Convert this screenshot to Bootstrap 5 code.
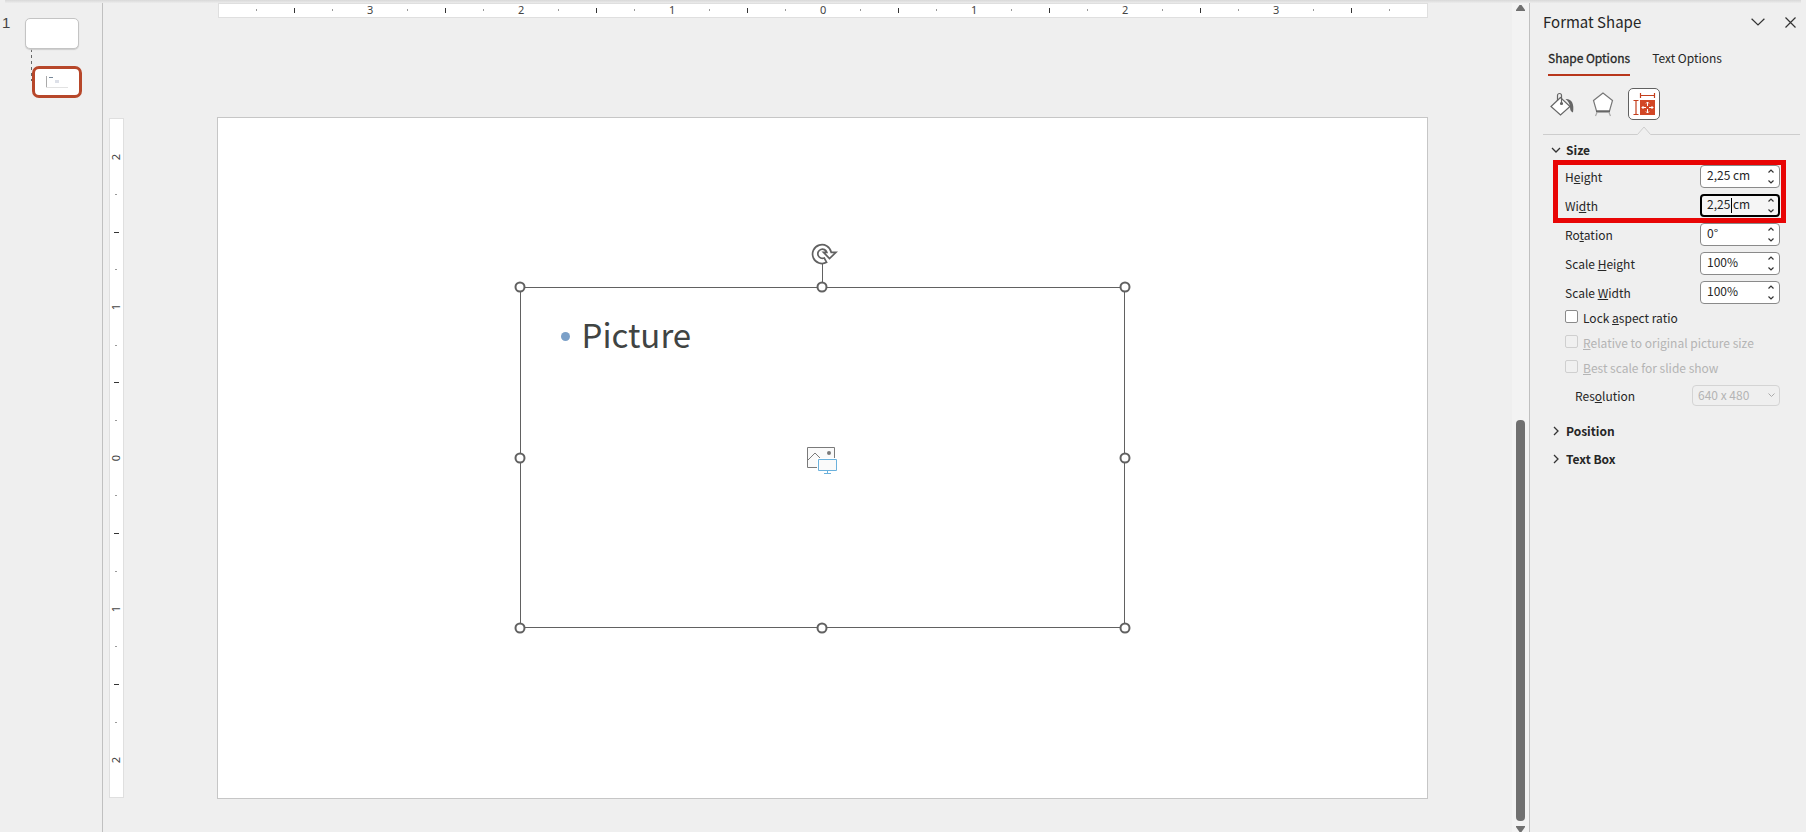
<!DOCTYPE html>
<html lang="en">
<head>
<meta charset="utf-8">
<meta name="viewport" content="width=device-width, initial-scale=1">
<title>Format Shape</title>
<link href="https://cdn.jsdelivr.net/npm/bootstrap@5.3.0/dist/css/bootstrap.min.css" rel="stylesheet">
<style>
:root { --ui: "Noto Sans CJK SC", "Noto Sans", sans-serif; --line: #c0c0c0; --accent: #b7472a; }
body { background: #efefef; color: #262626; font: 12px/16px var(--ui); }
.app-shell { min-height: 100vh; }
.app-shell::before { content: ""; position: absolute; inset: 0 5px auto 5px; height: 3px; background: linear-gradient(#d8d8d8, #ececec); }
/* Slide thumbnails */
.thumbs { width: 103px; border-right: 1px solid var(--line); padding: 15px 20px 0 2px; }
.thumb-no { font: 15px/15px "Liberation Sans", sans-serif; width: 23px; color: #444; }
.thumb-a { width: 54px; height: 31px; margin-top: 3px; border: 1px solid #c4c4c4; border-radius: 5px; box-shadow: 0 1px 1px #ccc; }
.thumb-b { width: 50px; height: 32px; margin: -15px 0 0 30px; border: 3px solid var(--accent); border-radius: 7px; }
.thumb-link { width: 1px; height: 32px; background: repeating-linear-gradient(#666 0 3px, transparent 3px 6px); margin-left: 29px; }
/* Canvas */
.stage { display: grid; grid-template-columns: 15px minmax(0, 1fr); grid-template-rows: 15px auto; column-gap: 93px; row-gap: 99px; align-content: start; padding: 3px 84px 0 6px; }
.ruler { background: #fff; border: 1px solid #dfdfdf; display: flex; font: 11px/12px "Noto Sans", sans-serif; color: #444; }
.ruler span { flex: 1 1 0; min-width: 0; min-height: 0; display: flex; align-items: center; justify-content: center; }
.ruler-x { grid-column: 2; padding: 0 1.5625% 1px; margin-left: 1px; }
.ruler-y { flex-direction: column; margin: 1px 0; padding-right: 1px; }
.ruler-y::before, .ruler-y::after { content: ""; flex: .5 1 0; }
.ruler-y b { writing-mode: vertical-rl; transform: rotate(180deg); }
.ruler b { font-weight: 400; }
.ruler i { background: #333; width: 1px; height: 5px; }
.ruler i.dot { background: #999; height: 2px; }
.ruler-y i { width: 5px; height: 1px; }
.ruler-y i.dot { width: 2px; height: 1px; }
.slide { aspect-ratio: 1212 / 683; background: #fff; box-shadow: inset 0 0 0 1px #c6c6c6; padding: 0 1px 1px 0; }
.frame { width: 50%; height: 50%; box-shadow: inset 0 0 0 1px #616161; padding: 24px 41px; }
.frame h1 { font: 33px/46px "Noto Sans CJK SC", sans-serif; color: #404443; gap: 12px; }
.bullet { width: 9px; height: 9px; margin-top: 4px; background: #7ba0c8; }
.grip { width: 11px; height: 11px; border: 2px solid #616161; background: #fff; }
.stem { height: 18px; width: 1px; background: #616161; top: -23px; }
.turn { top: -45px; margin-left: 2px; }
/* Scrollbar */
.scroll-col { width: 17px; background: #f3f3f3; padding: 4px 0 0; }
.scroll-thumb { width: 9px; background: #707070; border-radius: 4px; }
/* Format pane */
.pane { width: 277px; border-left: 1px solid var(--line); padding: 11px 6px 0 13px; }
.pane h2 { font: 15px/22px var(--ui); }
.plain { border: 0; background: none; padding: 0; display: flex; color: inherit; }
.pane-tabs { gap: 22px; padding-left: 5px; margin-top: 12px; }
.pane-tabs .nav-link { padding: 5px 0 8px; line-height: 16px; color: #262626; border-bottom: 2px solid transparent; white-space: nowrap; border-radius: 0; }
.pane-tabs .active { border-color: #b8361b; -webkit-text-stroke: .3px; }
.icon-row { margin-top: 12px; padding-left: 3px; gap: 9px; }
.icon-row button { width: 32px; height: 32px; align-items: center; justify-content: center; }
.icon-row .chosen { background: #fff; border: 1px solid #616161; border-radius: 5px; }
.notch { display: block; height: 9px; margin-top: 6px; }
.section-h { font: bold 12px/18px var(--ui); gap: 5px; padding-left: 8px; }
.first-section { margin-top: 6px; }
.fields { padding: 6px 20px 0 22px; }
.field { height: 23px; margin-bottom: 6px; }
.field label { padding-top: 4px; }
.spin { width: 80px; height: 23px; border: 1px solid #8a8a8a; border-radius: 4px; background: #fff; }
.spin input { width: 54px; border: 0; outline: 0; background: none; padding: 0 0 4px 6px; color: #262626; line-height: 17px; }
.spin.live { border: 2px solid #000; background: #f5f5f5; }
.spin.live input { padding-left: 5px; }
.steps { padding: 3px 5px; }
.spin.live .steps { padding: 2px 4px; }
.text-caret { width: 1px; height: 15px; background: #000; left: 29px; top: 2px; }
.marked::after { content: ""; position: absolute; inset: -5px -6px -6px -12px; border: 5px solid #e80505; pointer-events: none; }
.tick-row { height: 16px; margin-bottom: 9px; gap: 5px; }
.tick-row input { appearance: none; width: 13px; height: 13px; margin: 0; border: 1px solid #8a8a8a; border-radius: 2px; background: #fff; }
.tick-row.off { color: #b4b4b4; }
.tick-row.off input { border-color: #cfcfcf; background: #f0f0f0; }
.res label { padding-left: 10px; }
.res select { appearance: none; width: 88px; height: 21px; border: 1px solid #d4d4d4; border-radius: 4px; background: #efefef; color: #b4b4b4; padding: 0 5px 2px; opacity: 1; }
.res svg { right: 5px; top: 8px; }
.next-section { margin-top: 10px; }
</style>
</head>
<body>
<div class="app-shell d-flex position-relative">
  <nav class="thumbs flex-shrink-0" aria-label="Slides">
    <div class="d-flex"><span class="thumb-no">1</span><div class="thumb-a bg-white"></div></div>
    <div class="thumb-link"></div>
    <div class="thumb-b bg-white d-flex align-items-center justify-content-center">
      <svg width="44" height="26" viewBox="0 0 44 26" fill="none"><path d="M11.5 7v12" stroke="#aaa"/><path d="M14 8.500h4" stroke="#789"/><path d="M11 18.500h22" stroke="#e2e2e2"/><path d="M20 11h4v3h-4z" fill="#dde0e8"/></svg>
    </div>
  </nav>

  <main class="stage flex-fill">
    <div class="ruler ruler-x"><span><i class="dot"></i></span><span><i></i></span><span><i class="dot"></i></span><span><b>3</b></span><span><i class="dot"></i></span><span><i></i></span><span><i class="dot"></i></span><span><b>2</b></span><span><i class="dot"></i></span><span><i></i></span><span><i class="dot"></i></span><span><b>1</b></span><span><i class="dot"></i></span><span><i></i></span><span><i class="dot"></i></span><span><b>0</b></span><span><i class="dot"></i></span><span><i></i></span><span><i class="dot"></i></span><span><b>1</b></span><span><i class="dot"></i></span><span><i></i></span><span><i class="dot"></i></span><span><b>2</b></span><span><i class="dot"></i></span><span><i></i></span><span><i class="dot"></i></span><span><b>3</b></span><span><i class="dot"></i></span><span><i></i></span><span><i class="dot"></i></span></div>
    <div class="ruler ruler-y"><span><b>2</b></span><span><i class="dot"></i></span><span><i></i></span><span><i class="dot"></i></span><span><b>1</b></span><span><i class="dot"></i></span><span><i></i></span><span><i class="dot"></i></span><span><b>0</b></span><span><i class="dot"></i></span><span><i></i></span><span><i class="dot"></i></span><span><b>1</b></span><span><i class="dot"></i></span><span><i></i></span><span><i class="dot"></i></span><span><b>2</b></span></div>
    <section class="slide d-flex align-items-center justify-content-center">
      <div class="frame position-relative">
        <h1 class="d-flex align-items-center m-0"><span class="bullet rounded-circle"></span>Picture</h1>
        <svg class="position-absolute top-50 start-50 translate-middle" width="32" height="34" viewBox="0 -4 32 34" fill="none">
          <path d="M1.500 2.500h27v20h-27z" fill="#fafafa" stroke="#7a7a7a"/><path d="M2 15l7-7 6 6" stroke="#7a7a7a"/><circle cx="23" cy="8" r="2" fill="#7a7a7a"/>
          <path d="M11 13h20v14H11z" fill="#fff"/><path d="M12.500 14.500h18v11h-18z" fill="#fafafa" stroke="#6bb1dc"/><path d="M21.500 26v2.500M18 28.500h7" stroke="#6bb1dc"/>
        </svg>
        <div class="stem position-absolute start-50"></div>
        <svg class="turn position-absolute start-50 translate-middle-x" width="28" height="24" viewBox="0 0 28 24" fill="none" stroke="#616161" stroke-width="1.700">
          <path d="M16.600 20.300A9.400 9.400 0 1 1 21.200 10.300H26l-6.500 6.200-6-6.200h3.300a4.600 4.600 0 1 0-2.500 5.700z"/>
        </svg>
        <span class="grip position-absolute rounded-circle top-0 start-0 translate-middle"></span>
        <span class="grip position-absolute rounded-circle top-0 start-50 translate-middle"></span>
        <span class="grip position-absolute rounded-circle top-0 start-100 translate-middle"></span>
        <span class="grip position-absolute rounded-circle top-50 start-0 translate-middle"></span>
        <span class="grip position-absolute rounded-circle top-50 start-100 translate-middle"></span>
        <span class="grip position-absolute rounded-circle top-100 start-0 translate-middle"></span>
        <span class="grip position-absolute rounded-circle top-100 start-50 translate-middle"></span>
        <span class="grip position-absolute rounded-circle top-100 start-100 translate-middle"></span>
      </div>
    </section>
  </main>

  <div class="scroll-col d-flex flex-column align-items-center flex-shrink-0">
    <svg width="9" height="7" viewBox="0 0 9 7"><path d="M0 7V6l3.500-5h2L9 6v1z" fill="#707070"/></svg>
    <div class="d-flex flex-column justify-content-end flex-fill"><div class="scroll-thumb" style="height:49.500%"></div></div>
    <svg class="mt-1" width="9" height="7" viewBox="0 0 9 7"><path d="M0 1v1l3.500 5h2L9 2V1z" fill="#707070"/></svg>
  </div>

  <aside class="pane flex-shrink-0">
    <header class="d-flex align-items-center">
      <h2 class="m-0 me-auto">Format Shape</h2>
      <button class="plain" aria-label="Pane options"><svg width="14" height="8" viewBox="0 0 14 8" fill="none" stroke="#333" stroke-width="1.200"><path d="M.6.8 7 7 13.400.8"/></svg></button>
      <button class="plain ms-3 me-1 ps-1" aria-label="Close"><svg width="11" height="11" viewBox="0 0 11 11" stroke="#333" stroke-width="1.200"><path d="M.5.5l10 10M10.500.5l-10 10"/></svg></button>
    </header>
    <nav class="nav flex-nowrap pane-tabs">
      <a class="nav-link active" href="#shape">Shape Options</a>
      <a class="nav-link" href="#text">Text Options</a>
    </nav>
    <div class="d-flex icon-row">
      <button class="plain" aria-label="Fill and line"><svg width="26" height="26" viewBox="0 0 26 26" fill="none" stroke="#666" stroke-width="1.200"><path d="M11.500 6.500 2 15.500l9.500 8.500 9.500-8.500z" fill="#fff"/><path d="M8.500 10V4.500a2 2 0 0 1 4 0V12"/><circle cx="12.500" cy="12.500" r="1" fill="#666"/><path d="M16.500 8c6-.5 9 4.500 7.500 13.500-2-1-3-2-3-5.500-.5-4-2-6-4.500-8z" fill="#666" stroke="none"/></svg></button>
      <button class="plain" aria-label="Effects"><svg width="24" height="26" viewBox="0 0 24 26" fill="none" stroke="#777" stroke-width="1.200"><path d="M12 2 2.500 9.500 5.500 20h13l3-10.500z" fill="#fff"/><path d="M5 20.500h14" stroke="#666" stroke-width="2"/><path d="M6 21.500 4.500 25M18 21.500l1.500 3.500" stroke="#aaa"/></svg></button>
      <button class="plain chosen" aria-label="Size and properties"><svg width="24" height="24" viewBox="0 0 24 24" fill="none"><path d="M8.500 1v5M22.500 1v5M9 3.500h13M1.500 8.500h5M1.500 22.500h5M4 9v13" stroke="#c43e1c" stroke-width="1.200"/><path d="M8 8h15v15H8z" fill="#d24726"/><path d="M15.500 10v4M15.500 17v4M10 15.500h4M17 15.500h4M14 11.500l1.500-1.500 1.500 1.500M14 19.500l1.500 1.500 1.500-1.500M11.500 14 10 15.500l1.500 1.500M19.500 14l1.500 1.500-1.500 1.500" stroke="#fff"/></svg></button>
    </div>
    <svg class="notch w-100" viewBox="0 0 257 9" preserveAspectRatio="none" fill="none" stroke="#cdcdcd"><path d="M0 8.500h94.500L101 1l6.500 7.500H257"/></svg>

    <section>
      <button class="plain section-h align-items-center first-section"><svg width="10" height="10" viewBox="0 0 10 10" fill="none" stroke="#333" stroke-width="1.300"><path d="M1 3l4 4 4-4"/></svg>Size</button>
      <div class="fields">
        <div class="marked position-relative">
          <div class="field d-flex justify-content-between"><label for="h">H<u>e</u>ight</label>
            <div class="spin d-flex justify-content-between"><input id="h" value="2,25 cm"><div class="steps d-flex flex-column justify-content-between"><button class="plain" aria-label="Increase"><svg width="6" height="4" viewBox="0 0 6 4" fill="none" stroke="#333" stroke-width="1.200"><path d="M.5 3.500 3 1l2.500 2.500"/></svg></button><button class="plain" aria-label="Decrease"><svg width="6" height="4" viewBox="0 0 6 4" fill="none" stroke="#333" stroke-width="1.200"><path d="M.5.5 3 3 5.500.5"/></svg></button></div></div></div>
          <div class="field d-flex justify-content-between"><label for="w">Wi<u>d</u>th</label>
            <div class="spin live position-relative d-flex justify-content-between"><input id="w" value="2,25 cm"><span class="text-caret position-absolute"></span><div class="steps d-flex flex-column justify-content-between"><button class="plain" aria-label="Increase"><svg width="6" height="4" viewBox="0 0 6 4" fill="none" stroke="#333" stroke-width="1.200"><path d="M.5 3.500 3 1l2.500 2.500"/></svg></button><button class="plain" aria-label="Decrease"><svg width="6" height="4" viewBox="0 0 6 4" fill="none" stroke="#333" stroke-width="1.200"><path d="M.5.5 3 3 5.500.5"/></svg></button></div></div></div>
        </div>
        <div class="field d-flex justify-content-between"><label for="r">Ro<u>t</u>ation</label>
          <div class="spin d-flex justify-content-between"><input id="r" value="0°"><div class="steps d-flex flex-column justify-content-between"><button class="plain" aria-label="Increase"><svg width="6" height="4" viewBox="0 0 6 4" fill="none" stroke="#333" stroke-width="1.200"><path d="M.5 3.500 3 1l2.500 2.500"/></svg></button><button class="plain" aria-label="Decrease"><svg width="6" height="4" viewBox="0 0 6 4" fill="none" stroke="#333" stroke-width="1.200"><path d="M.5.5 3 3 5.500.5"/></svg></button></div></div></div>
        <div class="field d-flex justify-content-between"><label for="sh">Scale <u>H</u>eight</label>
          <div class="spin d-flex justify-content-between"><input id="sh" value="100%"><div class="steps d-flex flex-column justify-content-between"><button class="plain" aria-label="Increase"><svg width="6" height="4" viewBox="0 0 6 4" fill="none" stroke="#333" stroke-width="1.200"><path d="M.5 3.500 3 1l2.500 2.500"/></svg></button><button class="plain" aria-label="Decrease"><svg width="6" height="4" viewBox="0 0 6 4" fill="none" stroke="#333" stroke-width="1.200"><path d="M.5.5 3 3 5.500.5"/></svg></button></div></div></div>
        <div class="field d-flex justify-content-between"><label for="sw">Scale <u>W</u>idth</label>
          <div class="spin d-flex justify-content-between"><input id="sw" value="100%"><div class="steps d-flex flex-column justify-content-between"><button class="plain" aria-label="Increase"><svg width="6" height="4" viewBox="0 0 6 4" fill="none" stroke="#333" stroke-width="1.200"><path d="M.5 3.500 3 1l2.500 2.500"/></svg></button><button class="plain" aria-label="Decrease"><svg width="6" height="4" viewBox="0 0 6 4" fill="none" stroke="#333" stroke-width="1.200"><path d="M.5.5 3 3 5.500.5"/></svg></button></div></div></div>
        <div class="tick-row d-flex"><input type="checkbox" id="lock"><label for="lock">Lock <u>a</u>spect ratio</label></div>
        <div class="tick-row off d-flex"><input type="checkbox" id="rel" disabled><label for="rel"><u>R</u>elative to original picture size</label></div>
        <div class="tick-row off d-flex"><input type="checkbox" id="best" disabled><label for="best"><u>B</u>est scale for slide show</label></div>
        <div class="res position-relative d-flex justify-content-between align-items-center"><label for="res">Res<u>o</u>lution</label><select id="res" disabled><option>640 x 480</option></select><svg class="position-absolute" width="7" height="5" viewBox="0 0 7 5" fill="none" stroke="#aaa"><path d="M.5.5l3 3 3-3"/></svg></div>
      </div>
    </section>
    <button class="plain section-h align-items-center mt-3"><svg width="10" height="10" viewBox="0 0 10 10" fill="none" stroke="#333" stroke-width="1.300"><path d="M3 1l4 4-4 4"/></svg>Position</button>
    <button class="plain section-h align-items-center next-section"><svg width="10" height="10" viewBox="0 0 10 10" fill="none" stroke="#333" stroke-width="1.300"><path d="M3 1l4 4-4 4"/></svg>Text Box</button>
  </aside>
</div>
<script src="https://cdn.jsdelivr.net/npm/bootstrap@5.3.0/dist/js/bootstrap.bundle.min.js"></script>
</body>
</html>
